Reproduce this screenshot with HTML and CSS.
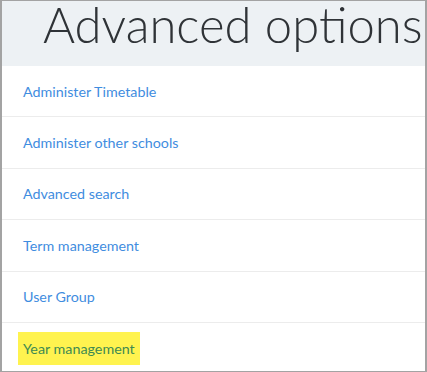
FILE: index.html
```html
<!DOCTYPE html>
<html lang="en">
<head>
    <meta charset="UTF-8">
    <title>Advanced options</title>
    <link rel="stylesheet" href="styles.css">
</head>
<body>
    <div class="frame">
        <div class="page-header">
            <h1>Advanced options</h1>
        </div>
        <ul class="option-list">
            <li><a href="#">Administer Timetable</a></li>
            <li><a href="#">Administer other schools</a></li>
            <li><a href="#">Advanced search</a></li>
            <li><a href="#">Term management</a></li>
            <li><a href="#">User Group</a></li>
            <li><a href="#" class="marked">Year management</a></li>
        </ul>
    </div>
</body>
</html>
```

FILE: styles.css
```css
html, body {
    margin: 0;
    height: 100%;
}
body {
    font-family: Lato, "Open Sans", sans-serif;
    background-color: #fff;
    color: #333;
}
.frame {
    box-sizing: border-box;
    height: 372px;
    border: 1px solid #a3a3a3;
    border-left-width: 2px;
    border-right-width: 2px;
    overflow: hidden;
}
.page-header {
    height: 65px;
    background-color: #edf1f4;
    padding-left: 41px;
    overflow: hidden;
    white-space: nowrap;
}
.page-header h1 {
    margin: 0;
    font-size: 49px;
    font-weight: 300;
    line-height: 46px;
    color: #2f3337;
}
.option-list {
    list-style: none;
    margin: 0;
    padding: 0;
}
.option-list li {
    height: 50.4px;
    display: flex;
    align-items: center;
    padding-left: 21px;
    border-bottom: 1px solid #ececec;
}
.option-list li:last-child {
    border-bottom: none;
}
.option-list a {
    font-size: 14.3px;
    color: #3f8de0;
    text-decoration: none;
}
.option-list a.marked {
    background-color: #fff34f;
    color: #3e8a52;
    padding: 8px 5px;
    margin-left: -5px;
}
```
